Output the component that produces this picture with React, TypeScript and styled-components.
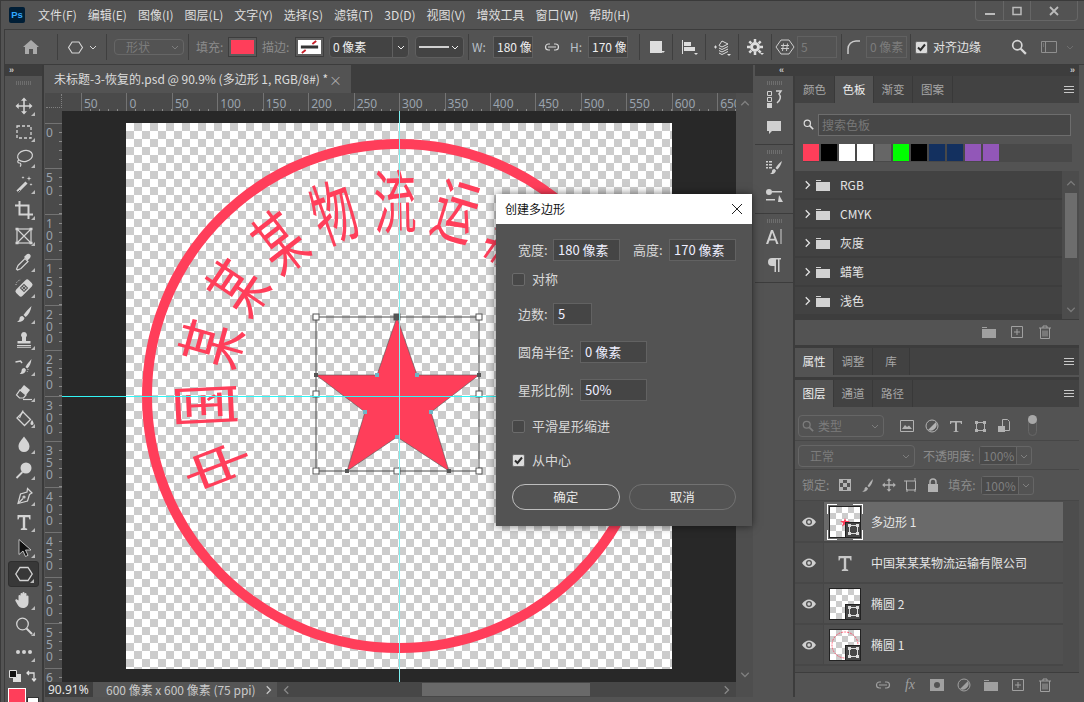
import React from 'react';
import styled, { createGlobalStyle, css } from 'styled-components';

const CJK = `"Noto Sans CJK SC", "Noto Sans", sans-serif`;
const RED = '#ff3e5a';

const Global = createGlobalStyle`
  html, body { margin: 0; padding: 0; height: 100%; background: #535353; overflow: hidden; }
  #root { height: 100%; }
  * { box-sizing: border-box; }
`;

const Win = styled.div`
  width: 1084px; height: 702px; display: flex; flex-direction: column; overflow: hidden;
  background: #535353; color: #e2e2e2; font: 12px/1 ${CJK}; border-top: 1px solid #3a3a3a; border-left: 1px solid #3a3a3a;
`;

/* ---------- menu ---------- */
const MenuBar = styled.div`height: 28px; display: flex; align-items: center; padding: 0 6px 0 8px; flex: none;`;
const PsLogo = styled.div`
  width: 16px; height: 16px; margin: 0 13px 0 0; background: #001e36; border-radius: 2px; color: #31a8ff;
  font: bold 9.5px/16px "Liberation Sans", sans-serif; text-align: center;
`;
const MenuItem = styled.span`margin-right: 11px; font-size: 12px; color: #dedede; white-space: nowrap;`;
const WinCtl = styled.div`
  margin-left: auto; align-self: flex-start; width: 103px; height: 20px; display: flex;
  border: 1px solid #666; border-top: none; border-radius: 0 0 4px 4px;
`;
const WinBtn = styled.div<{ $w: number; $line?: boolean }>`
  width: ${p => p.$w}px; display: flex; align-items: center; justify-content: center; color: #bbb;
  ${p => p.$line && 'border-right: 1px solid #666;'}
`;

/* ---------- options ---------- */
const OptionsBar = styled.div`
  height: 36px; flex: none; display: flex; align-items: center; margin-left: 3px;
  border-top: 1px solid #3c3c3c; border-bottom: 1px solid #3c3c3c; border-left: 1px solid #3c3c3c; background: #535353;
`;
const Slot = styled.div<{ $w: number; $ml?: number; $flag?: boolean }>`
  width: ${p => p.$w}px; margin-left: ${p => p.$ml ?? 0}px; flex: none; display: flex; align-items: center; justify-content: center; gap: 5px; position: relative; color: #d6d6d6;
  ${p => p.$flag && css`&::after { content: ''; position: absolute; right: 7px; bottom: -2px; border: 2px solid transparent; border-top-color: #ddd; }`}
`;
const VLine = styled.div<{ $ml?: number }>`width: 1px; height: 26px; background: #3f3f3f; flex: none; margin-left: ${p => p.$ml ?? 0}px;`;
const OptLabel = styled.span<{ $w: number; $ml?: number; $tone?: 'dim' | 'bright' }>`
  width: ${p => p.$w}px; margin-left: ${p => p.$ml ?? 0}px; flex: none; white-space: nowrap; font-size: 12px;
  color: ${p => (p.$tone === 'dim' ? '#8b8b8b' : p.$tone === 'bright' ? '#e2e2e2' : '#b9c0c8')};
`;
const OptBox = styled.div<{ $w: number; $ml?: number; $dim?: boolean }>`
  width: ${p => p.$w}px; height: 22px; margin-left: ${p => p.$ml ?? 0}px; flex: none; display: flex; align-items: center; overflow: hidden; white-space: nowrap;
  padding: 0 3px; border: 1px solid ${p => (p.$dim ? '#616161' : '#5f5f5f')}; background: ${p => (p.$dim ? 'transparent' : '#434343')};
  color: ${p => (p.$dim ? '#7c7c7c' : '#eee')}; font-size: 12px;
`;
const ColorChip = styled.div<{ $w: number; $ml?: number }>`
  width: ${p => p.$w}px; height: 20px; margin-left: ${p => p.$ml ?? 0}px; flex: none; padding: 2px; border: 1px solid #3d3d3d; background: #5c5c5c; display: flex;
`;
const ChipFill = styled.div<{ $c: string }>`flex: 1; background: ${p => p.$c};`;
const StrokeGlyph = styled.svg`width: 100%; height: 100%; display: block; background: #fff;`;
const Combo = styled.div<{ $w: number; $ml?: number; $dim?: boolean; $h?: number }>`
  width: ${p => p.$w}px; height: ${p => p.$h ?? 22}px; margin-left: ${p => p.$ml ?? 0}px; flex: none; display: flex; align-items: center; justify-content: space-between;
  border: 1px solid ${p => (p.$dim ? '#666' : '#5f5f5f')}; border-radius: 4px; padding: 0 4px 0 3px; color: ${p => (p.$dim ? '#7c7c7c' : '#eee')};
  background: ${p => (p.$dim ? 'transparent' : '#434343')};
`;
const ComboText = styled.span<{ $ml?: number }>`display: flex; align-items: center; gap: 4px; margin-left: ${p => p.$ml ?? 0}px;`;
const ComboSplit = styled.div`display: flex; align-self: stretch; align-items: center; padding-left: 4px; margin-right: -1px; border-left: 1px solid #5f5f5f;`;
const Muted = styled.span`color: #6e6e6e;`;
const CheckBox = styled.div<{ $on?: boolean }>`
  width: 13px; height: 13px; border-radius: 2px; flex: none; display: flex; align-items: center; justify-content: center;
  border: 1px solid #6b6b6b; background: ${p => (p.$on ? '#dcdcdc' : '#474747')}; color: #2c2c2c;
`;

/* ---------- workspace ---------- */
const Workspace = styled.div`flex: 1; min-height: 0; display: flex; margin-left: 3px; border-left: 1px solid #3c3c3c; padding-bottom: 5px; position: relative;`;
const ToolCol = styled.div`width: 38px; flex: none; display: flex; flex-direction: column; align-items: center; height: 640px; overflow: hidden; border-right: 1px solid #3a3a3a; box-shadow: 1px 0 0 #3a3a3a;`;
const StripHead = styled.div<{ $between?: boolean }>`
  height: 11px; width: 100%; flex: none; background: #3d3d3d; color: #c8c8c8; display: flex; align-items: center;
  justify-content: ${p => (p.$between ? 'space-between' : 'flex-start')}; padding: 0 4px; font: bold 9px/11px "Liberation Sans", sans-serif; letter-spacing: -1px;
`;
const Grip = styled.div<{ $mb?: number }>`
  width: 15px; height: 4px; flex: none; margin: 5px 0 ${p => p.$mb ?? 0}px; background: repeating-linear-gradient(90deg, #6e6e6e 0 1px, transparent 1px 2px);
`;
const ToolBtn = styled.div<{ $on?: boolean }>`
  width: 31px; height: 26px; flex: none; display: flex; align-items: center; justify-content: center; position: relative; color: #d4d4d4; border-radius: 3px;
  ${p => p.$on && css`background: #383838; border: 1px solid #2f2f2f;`}
  &::after { content: ''; position: absolute; right: 4px; bottom: 3px; border: 2px solid transparent; border-right-color: #bbb; border-bottom-color: #bbb; }
`;
const ColorRow = styled.div`width: 100%; height: 18px; flex: none; margin-top: 2px; display: flex; align-items: center; padding: 0 4px; justify-content: space-between; color: #ddd;`;
const Fg = styled.div`
  width: 18px; height: 18px; flex: none; align-self: flex-start; margin: 3px 0 0 3px; background: ${RED}; border: 1px solid #fff; position: relative;
  &::after { content: ''; position: absolute; left: 18px; top: 8px; width: 10px; height: 10px; background: #fff; border: 1px solid #333; }
`;

/* ---------- document ---------- */
const Doc = styled.div`width: 708px; flex: none; margin-left: 2px; display: flex; flex-direction: column; background: #3d3d3d;`;
const TabBar = styled.div`height: 28px; flex: none; display: flex; background: #3d3d3d;`;
const DocTab = styled.div`
  width: 306px; display: flex; align-items: center; justify-content: space-between; padding: 0 9px 0 9px; background: #535353; color: #dcdcdc; font-size: 12px; white-space: nowrap;
`;
const TabClose = styled.span`color: #aaa; font-size: 13px;`;
const RulerRow = styled.div`height: 18px; flex: none; display: flex; background: #4a4a4a;`;
const Corner = styled.div`
  width: 17px; flex: none; position: relative;
  &::before { content: ''; position: absolute; left: 1px; right: 0; bottom: 3px; border-bottom: 1px dotted #808080; }
  &::after { content: ''; position: absolute; right: 0; top: 1px; bottom: 3px; border-right: 1px dotted #808080; }
`;
const HRuler = styled.div`width: 674px; display: flex; overflow: hidden; padding-left: 19px;`;
const HCell = styled.div`
  width: 45.45px; flex: none; padding: 5px 0 0 2px; border-left: 1px solid #737373; color: #9aa3ad; font: 12px/12px "Noto Sans", sans-serif; overflow: hidden;
  background: repeating-linear-gradient(90deg, transparent 0 8px, #8a8a8a 8px 9.09px) bottom left / 100% 2px no-repeat;
`;
const ScrollCap = styled.div`flex: 1; background: #4e4e4e; display: flex; align-items: flex-end; justify-content: center; padding-bottom: 2px; color: #808080;`;
const DocBody = styled.div`flex: 1; min-height: 0; display: flex;`;
const VRuler = styled.div`width: 17px; flex: none; overflow: hidden; padding-top: 12px; background: #4a4a4a;`;
const VCell = styled.div`
  height: 45.45px; border-top: 1px solid #737373; padding: 3px 0 0 1px; color: #9aa3ad; font: 12px/12.2px "Noto Sans", sans-serif; overflow: hidden; white-space: pre;
  background: repeating-linear-gradient(180deg, transparent 0 8px, #8a8a8a 8px 9.09px) top right / 3px 100% no-repeat;
`;
const Stage = styled.div`flex: 1; min-width: 0; position: relative; overflow: hidden; background: #282828;`;
const Artboard = styled.div`
  width: 546px; height: 546px; margin: 12px 0 0 64px;
  background-color: #fff;
  background-image: conic-gradient(#ccc 25%, transparent 0 50%, #ccc 0 75%, transparent 0);
  background-size: 16px 16px; background-position: 0 0;
`;
const ArtSvg = styled.svg`display: block; width: 546px; height: 546px;`;
const GuideH = styled.div`position: absolute; left: 0; right: 0; top: 285px; height: 1px; background: #33f5f5;`;
const GuideV = styled.div`position: absolute; top: 0; bottom: 0; left: 337px; width: 1px; background: #7ff0f0;`;
const VScroll = styled.div`width: 17px; flex: none; background: #4e4e4e; display: flex; align-items: flex-end; justify-content: center; padding-bottom: 3px; color: #808080;`;
const Status = styled.div`height: 15px; flex: none; display: flex; align-items: stretch; background: #535353;`;
const Zoomed = styled.div`width: 48px; flex: none; padding-left: 3px; background: #3f3f3f; color: #e4e4e4; font: 12px/15px "Noto Sans", sans-serif;`;
const DocInfo = styled.div`width: 184px; flex: none; padding: 0 4px 0 13px; background: #555; color: #c9c9c9; font-size: 12px; line-height: 15px; white-space: nowrap; display: flex; justify-content: space-between; align-items: center;`;
const HScroll = styled.div`flex: 1; background: #474747; display: flex; align-items: center; padding: 0 5px; color: #8a8a8a;`;
const HThumb = styled.div`width: 168px; height: 13px; margin: 0 auto 0 130px; background: #696969;`;
const StatusCorner = styled.div`width: 17px; flex: none; background: #4e4e4e;`;

/* ---------- dialog ---------- */
const Dialog = styled.div`
  position: absolute; left: 496px; top: 194px; width: 256px; height: 332px; background: #535353; z-index: 5; display: flex; flex-direction: column;
  box-shadow: 0 0 8px rgba(0,0,0,.55);
`;
const DlgTitle = styled.div`height: 30px; flex: none; background: #fff; color: #111; display: flex; align-items: center; justify-content: space-between; padding: 0 8px 0 9px; font-size: 12px;`;
const DlgBody = styled.div`flex: 1; display: flex; flex-direction: column; padding: 15px 16px 16px;`;
const DlgRow = styled.div<{ $mt?: number; $indent?: boolean }>`display: flex; align-items: center; height: 22px; margin-top: ${p => p.$mt ?? 0}px; padding-left: ${p => (p.$indent ? 6 : 0)}px;`;
const DlgLabel = styled.span<{ $w?: number; $ml?: number }>`
  ${p => (p.$w ? `width: ${p.$w}px;` : '')} margin: -2px 0 0 ${p => p.$ml ?? 0}px; flex: none; font-size: 13px; color: #d8d8d8; white-space: nowrap;
`;
const DlgInput = styled.div<{ $w: number }>`
  width: ${p => p.$w}px; height: 22px; flex: none; display: flex; align-items: center; padding: 0 0 2px 4px; background: #454545; border: 1px solid #626262; color: #eef; font-size: 13px; white-space: nowrap;
`;
const DlgBtnRow = styled.div`display: flex; gap: 9px; margin-top: 13px;`;
const DlgBtn = styled.div<{ $primary?: boolean }>`
  width: 108px; height: 26px; border-radius: 13px; display: flex; align-items: center; justify-content: center; font-size: 12.5px; color: #e8e8e8;
  border: 1.5px solid ${p => (p.$primary ? '#bdbdbd' : '#727272')};
`;

/* ---------- right dock ---------- */
const RightDock = styled.div`width: 324px; flex: none; margin-left: 2px; display: flex; flex-direction: column;`;
const DockHead = styled(StripHead)`padding: 0 5px 0 24px; height: 11px;`;
const DockMain = styled.div`flex: 1; min-height: 0; display: flex; gap: 2px; background: #3c3c3c;`;
const IconDock = styled.div`width: 38px; flex: none; display: flex; flex-direction: column; gap: 1px; background: #3c3c3c;`;
const IconGroup = styled.div`height: 68px; flex: none; background: #535353; display: flex; flex-direction: column; align-items: center; color: #d0d0d0;`;
const IconGroupRest = styled.div`flex: 1; background: #535353;`;
const DockBtn = styled.div`height: 28px; flex: none; display: flex; align-items: center; justify-content: center;`;
const PanelsCol = styled.div`width: 284px; flex: none; display: flex; flex-direction: column; gap: 3px; background: #3c3c3c;`;
const Panel = styled.div<{ $h?: number; $grow?: boolean }>`
  ${p => (p.$h ? `height: ${p.$h}px;` : '')} ${p => (p.$grow ? 'flex: 1; min-height: 0;' : 'flex: none;')}
  background: #535353; display: flex; flex-direction: column;
`;
const TabStrip = styled.div`height: 27px; flex: none; display: flex; background: #424242; align-items: stretch; position: relative;`;
const PanelTab = styled.div<{ $on?: boolean; $w: number }>`
  width: ${p => p.$w}px; flex: none; display: flex; align-items: center; justify-content: center; font-size: 11.5px;
  background: ${p => (p.$on ? '#535353' : 'transparent')}; color: ${p => (p.$on ? '#eee' : '#a6a6a6')}; border-right: 1px solid #393939;
`;
const PanelMenu = styled.div`margin: 10px 5px 0 auto; width: 10px; height: 7px; background: repeating-linear-gradient(180deg, #c8c8c8 0 1px, transparent 1px 3px);`;
const SearchRow = styled.div`height: 21px; flex: none; margin: 11px 8px 0 8px; display: flex; align-items: center; gap: 4px; color: #ddd;`;
const SearchInput = styled.div`flex: 1; height: 22px; display: flex; align-items: center; padding-left: 3px; border: 1px solid #6d6d6d; background: #474747; color: #777; font-size: 12px;`;
const SwatchStrip = styled.div`height: 18px; flex: none; margin: 9px 7px 0 8px; display: flex; gap: 2px; background: #494949;`;
const Swatch = styled.div<{ $c: string }>`width: 16px; height: 17px; flex: none; background: ${p => p.$c};`;
const ListWrap = styled.div`height: 148px; flex: none; margin-top: 9px; display: flex; background: #4a4a4a;`;
const ListCol = styled.div`width: 267px; flex: none; display: flex; flex-direction: column; gap: 2px; background: #3d3d3d; overflow: hidden;`;
const ListRow = styled.div`height: 27px; flex: none; display: flex; align-items: center; padding-left: 7px; background: #424242; color: #e4e4e4; font-size: 12px;`;
const FolderSlot = styled.div`width: 24px; margin-left: 4px; flex: none; display: flex; align-items: center; color: #d2d2d2;`;
const ListScroll = styled.div`flex: 1; display: flex; flex-direction: column; align-items: center; padding-top: 8px; color: #7a7a7a; background: #4c4c4c;`;
const ListThumb = styled.div`width: 12px; height: 65px; margin-top: 4px; margin-bottom: 46px; background: #6d6d6d;`;
const PanelFoot = styled.div<{ $h: number; $gap: number }>`
  height: ${p => p.$h}px; flex: none; display: flex; align-items: center; justify-content: flex-end; padding-right: 25px; gap: ${p => p.$gap}px; border-top: 1px solid #3d3d3d; color: #999;
`;
const FootIcon = styled.div`width: 18px; display: flex; justify-content: center; color: #a0a0a0;`;
const FxMark = styled.i`font: italic 14px/1 "Liberation Serif", serif;`;
const LayerCtrl = styled.div<{ $h: number; $pt?: number }>`
  height: ${p => p.$h}px; flex: none; display: flex; align-items: center; padding: ${p => p.$pt ?? 0}px 0 0 3px; border-bottom: 1px solid #474747; color: #a2a2a2; position: relative;
`;
const DimText = styled.span<{ $ml?: number }>`margin-left: ${p => p.$ml ?? 0}px; color: #8b8b8b; font-size: 12px; white-space: nowrap; flex: none;`;
const CtlIcon = styled.div<{ $w: number; $ml?: number }>`width: ${p => p.$w}px; margin-left: ${p => p.$ml ?? 0}px; flex: none; display: flex; justify-content: center; color: #b2b2b2;`;
const FieldDim = styled.div`width: 53px; height: 19px; flex: none; margin-left: 5px; display: flex; border: 1px solid #666; border-radius: 3px; color: #7f7f7f;`;
const FieldValue = styled.div`width: 36px; padding-left: 3px; font-size: 12px; line-height: 17px; background: #4a4a4a;`;
const FieldArrow = styled.div`flex: 1; display: flex; align-items: center; justify-content: center; border-left: 1px solid #666;`;
const Toggle = styled.div`
  width: 9px; height: 20px; margin-left: 12px; border: 1px solid #666; border-radius: 5px; position: relative;
  &::before { content: ''; position: absolute; left: -1px; top: -2px; width: 9px; height: 9px; border-radius: 50%; background: #a8a8a8; }
`;
const Layers = styled.div`flex: 1; min-height: 0; display: flex; background: #4d4d4d; padding-top: 1px;`;
const LayerList = styled.div`width: 268px; flex: none; display: flex; flex-direction: column;`;
const LayerRow = styled.div`height: 41px; flex: none; display: flex; border-bottom: 2px solid #474747;`;
const EyeCell = styled.div`width: 29px; flex: none; display: flex; align-items: center; justify-content: center; color: #d0d0d0; border-right: 1px solid #474747;`;
const LayerBody = styled.div<{ $on?: boolean }>`flex: 1; display: flex; align-items: center; padding-left: 5px; background: ${p => (p.$on ? '#6a6a6a' : '#505050')}; color: #e6e6e6; font-size: 12px; white-space: nowrap;`;
const Thumb = styled.div<{ $on?: boolean }>`
  width: 32px; height: 32px; flex: none; margin-right: 10px; position: relative; border: 1px solid #222;
  background-color: #fff; background-image: conic-gradient(#ccc 25%, transparent 0 50%, #ccc 0 75%, transparent 0); background-size: 12px 12px;
  ${p => p.$on && css`
    &::before {
      content: ''; position: absolute; inset: -3px;
      background:
        linear-gradient(#fff, #fff) 0 0 / 10px 1px no-repeat, linear-gradient(#fff, #fff) 0 0 / 1px 10px no-repeat,
        linear-gradient(#fff, #fff) 100% 0 / 10px 1px no-repeat, linear-gradient(#fff, #fff) 100% 0 / 1px 10px no-repeat,
        linear-gradient(#fff, #fff) 0 100% / 10px 1px no-repeat, linear-gradient(#fff, #fff) 0 100% / 1px 10px no-repeat,
        linear-gradient(#fff, #fff) 100% 100% / 10px 1px no-repeat, linear-gradient(#fff, #fff) 100% 100% / 1px 10px no-repeat;
    }
  `}
`;
const ThumbBadge = styled.div`
  position: absolute; right: -1px; bottom: -1px; width: 16px; height: 16px; background: #474747; border: 1px solid #222; display: flex; align-items: center; justify-content: center; color: #ddd;
`;
const ThumbArt = styled.svg`position: absolute; inset: 0; width: 100%; height: 100%;`;
const TypeGlyph = styled.div`width: 32px; margin-right: 10px; display: flex; justify-content: center; color: #c8c8c8;`;

/* ---------- icons ---------- */
const IconSvg = styled.svg`display: block;`;
const S = ({ children, size = 20, vb = 20 }: { children: React.ReactNode; size?: number; vb?: number }) => (
  <IconSvg width={size} height={size} viewBox={`0 0 ${vb} ${vb}`} fill="none" stroke="none">{children}</IconSvg>
);
const F = 'currentColor';
const Chev = ({ s = 8, dir = 'down' }: { s?: number; dir?: 'down' | 'up' | 'left' | 'right' }) => {
  const d = { down: 'M1 3l3 3 3-3', up: 'M1 5l3-3 3 3', left: 'M5 1L2 4l3 3', right: 'M3 1l3 3-3 3' }[dir];
  return <S size={s} vb={8}><path d={d} stroke={F} strokeWidth="1" /></S>;
};
const tools: Record<string, React.ReactNode> = {
  move: <path fill={F} d="M10 1.500l3 3.200h-2.200v4.500h4.500V7l3.200 3-3.200 3v-2.200h-4.500v4.500H13l-3 3.200-3-3.200h2.200v-4.500H4.700V13L1.500 10l3.200-3v2.200h4.500V4.700H7z" />,
  marquee: <rect x="3" y="4" width="14" height="12" stroke={F} strokeWidth="1.300" strokeDasharray="3 2" />,
  lasso: <g stroke={F} strokeWidth="1.200"><ellipse cx="11" cy="8" rx="7.500" ry="5.500" transform="rotate(-12 11 8)" /><path d="M5 12c-2 1-1.500 3 .5 3s1.500 2.500.5 3.500" /></g>,
  wand: <g><path d="M3.500 17.500l9-9" stroke={F} strokeWidth="3" /><path d="M4 18l2-2" stroke="#535353" strokeWidth="1" /><path fill={F} d="M15 2l.6 1.900L17.500 4.500l-1.900.6L15 7l-.6-1.900-1.900-.6 1.900-.6zM9 2l.4 1.100 1.100.4-1.100.4L9 5l-.4-1.100-1.100-.4 1.100-.4zM17 9l.4 1.100 1.100.4-1.100.4L17 12l-.4-1.100-1.100-.4 1.100-.4z" /></g>,
  crop: <path d="M5.500 1v13.500H19M1 5.500h13.500V19" stroke={F} strokeWidth="2" />,
  frame: <g stroke={F} strokeWidth="1.200"><rect x="3" y="3" width="14" height="14" /><path d="M3 3l14 14M17 3L3 17" /><path strokeWidth="2.500" d="M1.500 3h3M15.500 3h3M1.500 17h3M15.500 17h3" /></g>,
  dropper: <g><path d="M4 13.500l7-7 3 3-7 7-3.500 1.500-1-1z" stroke={F} strokeWidth="1.200" /><path fill={F} d="M10 5l2-2c1.500-1.500 3-1.500 4-.5s1 2.500-.5 4l-2 2z" /></g>,
  heal: <g><g transform="rotate(-45 10 10)"><rect x="1" y="5.500" width="18" height="9" rx="2.500" fill={F} /><rect x="7" y="7" width="6" height="6" fill="#535353" /><path fill={F} d="M8 8h1.500v1.500H8zM10.500 8H12v1.500h-1.500zM8 10.500h1.500V12H8zM10.500 10.500H12V12h-1.500z" /></g><path d="M2 7a5 5 0 0 1 5-5" stroke={F} strokeDasharray="1 1.500" /></g>,
  brush: <path fill={F} d="M17.500 2c-2.500 2.500-6 6-8 9l2.200 2c3-2.500 5-6 5.800-11zM8.500 12c-2.500 0-3 1.500-3 3 0 1-1 2-2.500 3 3.500.5 7-1 7.500-4z" />,
  stamp: <path fill={F} d="M10 2a3 3 0 0 1 2 5.200V11h4.500v2.500h-13V11H8V7.200A3 3 0 0 1 10 2zM3 15h14v1.200H3zM3 17.200h14V18H3z" />,
  history: <g><path fill={F} d="M17.500 3c-2 2.500-4.500 5-6 8l1.800 1.600c2.500-2.500 3.700-5 4.200-9.600zM10.500 12c-2 0-3 1-3 3 0 1-.7 2-1.800 3 3 .5 6-1 6.300-4.200z" /><path d="M1.500 6l5-1 1.500 2" stroke={F} strokeWidth="1.500" /><path d="M14 13a5 5 0 0 1-1 3" stroke={F} strokeDasharray="1 1" /></g>,
  eraser: <g><path fill={F} d="M10 3l6 5-4 5-6-5z" /><path d="M6 8l6 5-2.500 3H5.500L2.500 13z" stroke={F} strokeWidth="1.200" /><path d="M9 17.500h9" stroke={F} strokeWidth="1.200" /></g>,
  bucket: <g><path d="M9 4l7.500 7.500-6 6L3 10z" stroke={F} strokeWidth="1.300" /><path d="M5.500 10L9 2.500" stroke={F} strokeWidth="1.200" /><path fill={F} d="M18 12c1 1.500 1.500 2.500 1.500 3.500a1.500 1.500 0 0 1-3 0c0-1 .5-2 1.500-3.500z" /></g>,
  blur: <path fill={F} d="M10 2.500c3 4 5.500 6.500 5.500 10a5.500 5.500 0 0 1-11 0c0-3.500 2.500-6 5.500-10z" />,
  dodge: <g><circle cx="12" cy="8" r="5.500" fill={F} /><path d="M2.500 18L8.500 12" stroke={F} strokeWidth="1.800" /></g>,
  pen: <g stroke={F} strokeWidth="1.200"><path d="M13.500 2.500l4.500 4.500-2.500 1.500-2 6.500-9.500 2.500 2.500-9.500 6.500-2z" /><path d="M4.500 17L9 12.500" /><circle cx="10" cy="11" r="1" /></g>,
  type: <path fill={F} d="M3.500 3h13v4.500h-1l-.8-2.300H11.200V16l2 .7V18H6.800v-1.300l2-.7V5.200H5.300L4.500 7.500h-1z" />,
  select: <path fill="#111" stroke="#ddd" strokeWidth=".8" d="M5 1.500v15l4-3.500 2.500 5.500 2.500-1.200L11.500 12H17z" />,
  hex: <path d="M6 3.500h8l4.200 6.500-4.200 6.500H6L1.800 10z" stroke={F} strokeWidth="1.300" />,
  hand: <path fill={F} d="M4.500 10.500V6a1 1 0 0 1 2 0V4a1 1 0 0 1 2 0V3a1 1 0 0 1 2 0v1a1 1 0 0 1 2 0v2.500a1 1 0 0 1 2 0V12c0 3.500-2 6-5.500 6-3 0-4.200-1.500-5.500-3.500L1.500 11c-.8-1.300.9-2.300 1.800-1.200z" />,
  zoom: <g stroke={F}><circle cx="8.500" cy="8" r="5.800" strokeWidth="1.300" /><path d="M12.500 12.500L18 18" strokeWidth="2" /></g>,
  dots: <g fill={F}><circle cx="4" cy="10" r="2" /><circle cx="10" cy="10" r="2" /><circle cx="16" cy="10" r="2" /></g>,
};
const toolOrder = ['move', 'marquee', 'lasso', 'wand', 'crop', 'frame', 'dropper', 'heal', 'brush', 'stamp', 'history', 'eraser', 'bucket', 'blur', 'dodge', 'pen', 'type', 'select', 'hex', 'hand', 'zoom', 'dots'];

const Eye = () => <S size={16} vb={16}><path fill={F} d="M1 8c2-3 4.500-4.500 7-4.500S13 5 15 8c-2 3-4.500 4.500-7 4.500S3 11 1 8z" /><circle cx="8" cy="8" r="3" fill="#505050" /><circle cx="8" cy="8" r="1.700" fill={F} /></S>;
const FolderI = ({ s = 14 }: { s?: number }) => <S size={s} vb={14}><path fill={F} d="M0 2h5v1H0zM0 4h14v9H0z" /></S>;
const PlusBox = () => <S size={12} vb={12}><path stroke={F} d="M.5.500h11v11H.500zM6 3v6M3 6h6" /></S>;
const Trash = () => <S size={14} vb={14}><path stroke={F} d="M1 3h12M5 3V1h4v2M2.500 3v10.500h9V3M5 5.500v6M7 5.500v6M9 5.500v6" /></S>;
const MiniPath = () => <S size={11} vb={11}><path stroke={F} d="M1.500 1.500h8v8h-8z" /><path fill={F} d="M0 0h3v3H0zM8 0h3v3H8zM0 8h3v3H0zM8 8h3v3H8z" /></S>;
const Glass = ({ s = 14 }: { s?: number }) => <S size={s} vb={14}><circle cx="5.500" cy="5.500" r="4" stroke={F} strokeWidth="1.500" /><path d="M8.500 8.500L13 13" stroke={F} strokeWidth="2" /></S>;
const Check = () => <S size={9} vb={9}><path d="M1 4.500l2.500 2.500L8 1.500" stroke={F} strokeWidth="2" /></S>;
const Link = () => <S size={16} vb={16}><path stroke={F} strokeWidth="1.200" d="M6 5H4.500a3 3 0 0 0 0 6H6M10 5h1.500a3 3 0 0 1 0 6H10M4 8h8" /></S>;

/* ---------- data ---------- */
const menus = ['文件(F)', '编辑(E)', '图像(I)', '图层(L)', '文字(Y)', '选择(S)', '滤镜(T)', '3D(D)', '视图(V)', '增效工具', '窗口(W)', '帮助(H)'];
const hTicks = ['50', '0', '50', '100', '150', '200', '250', '300', '350', '400', '450', '500', '550', '600', '650'];
const vTicks = ['0', '5\n0', '1\n0\n0', '1\n5\n0', '2\n0\n0', '2\n5\n0', '3\n0\n0', '3\n5\n0', '4\n0\n0', '4\n5\n0', '5\n0\n0', '5\n5\n0', '6'];
const swatches = [RED, '#000', '#fff', '#fff', '#666', '#0f0', '#000', '#13305f', '#13305f', '#9257b8', '#9257b8'];
const groups = ['RGB', 'CMYK', '灰度', '蜡笔', '浅色'];
const sealChars = '中国某某某物流运输有限公司'.split('');
const starPts = '397,317 417,375 479,375 431,412 449,471 397,437 347,471 365,412 316,375 377,375';
const handles: [number, number][] = [[316, 317], [397, 317], [479, 317], [316, 394], [479, 394], [316, 471], [397, 471], [479, 471]];

const Seal = () => (
  <ArtSvg viewBox="126 123 546 546">
    <circle cx="399" cy="396" r="252" fill="none" stroke={RED} strokeWidth="10" />
    {sealChars.map((c, i) => {
      const a = -111 + i * 18.3;
      return (
        <text
          key={i}
          transform={`rotate(${a} 399 396) translate(399 201) scale(0.61 1)`}
          y="27"
          textAnchor="middle"
          fontFamily={`"Noto Sans CJK SC", sans-serif`}
          fontSize="70"
          fill={RED}
        >{c}</text>
      );
    })}
    <polygon points={starPts} fill={RED} stroke="#555" strokeWidth=".6" />
    <rect x="316" y="317" width="163" height="154" fill="none" stroke="#4a4a4a" strokeWidth="1" />
    {handles.map(([x, y], i) => (
      <rect key={i} x={x - 3} y={y - 3} width="6" height="6" fill={i === 1 ? '#555' : '#fff'} stroke="#555" />
    ))}
    {[[316, 375], [479, 375], [347, 471], [449, 471]].map(([x, y], i) => (
      <rect key={i} x={x - 2} y={y - 2} width="4" height="4" fill="#555" />
    ))}
    {[[377, 375], [417, 375], [365, 412], [431, 412], [397, 437]].map(([x, y], i) => (
      <rect key={i} x={x - 2} y={y - 2} width="4" height="4" fill="#6fb5c5" />
    ))}
  </ArtSvg>
);

const LayerThumb = ({ on, art }: { on?: boolean; art?: 'star' | 'ring' }) => (
  <Thumb $on={on}>
    {art === 'star' && <ThumbArt viewBox="0 0 30 30"><path fill={RED} d="M15 11l1.200 3H20l-3 2 1 3.500L15 17.500 12 19.500l1-3.500-3-2h3.800z" /></ThumbArt>}
    {art === 'ring' && <ThumbArt viewBox="0 0 30 30"><circle cx="15" cy="15" r="13" fill="none" stroke={RED} strokeWidth=".8" strokeDasharray="2 1" /></ThumbArt>}
    <ThumbBadge><MiniPath /></ThumbBadge>
  </Thumb>
);

export default function App() {
  return (
    <Win>
      <Global />
      <MenuBar>
        <PsLogo>Ps</PsLogo>
        {menus.map(m => <MenuItem key={m}>{m}</MenuItem>)}
        <WinCtl>
          <WinBtn $w={28} $line><S size={10} vb={10}><path fill={F} d="M0 7h10v2H0z" /></S></WinBtn>
          <WinBtn $w={27} $line><S size={10} vb={10}><path stroke={F} strokeWidth="1.500" d="M1 1.500h8v7H1z" /></S></WinBtn>
          <WinBtn $w={46}><S size={10} vb={10}><path stroke={F} strokeWidth="1.800" d="M1 1l8 8M9 1l-8 8" /></S></WinBtn>
        </WinCtl>
      </MenuBar>

      <OptionsBar>
        <Slot $w={52}><S size={18} vb={18}><path fill="#a9a9a9" d="M9 2l8 7h-2v7h-4v-5H7v5H3V9H1z" /></S></Slot>
        <VLine />
        <Slot $w={48}><S size={17}>{tools.hex}</S><Chev /></Slot>
        <VLine />
        <Combo $w={70} $ml={7} $dim $h={16}><ComboText $ml={8}>形状</ComboText><Chev /></Combo>
        <VLine $ml={4} />
        <OptLabel $w={29} $ml={7} $tone="dim">填充:</OptLabel>
        <ColorChip $w={29} $ml={3}><ChipFill $c={RED} /></ColorChip>
        <OptLabel $w={29} $ml={5} $tone="dim">描边:</OptLabel>
        <ColorChip $w={29} $ml={4}>
          <StrokeGlyph viewBox="0 0 24 14" preserveAspectRatio="none">
            <path d="M3 7h18" stroke="#333" strokeWidth="3" />
            <path d="M15 4l4-3M4 13l4-3" stroke="#c8202a" strokeWidth="2" />
          </StrokeGlyph>
        </ColorChip>
        <Combo $w={80} $ml={5}><span>0 像素</span><ComboSplit><Chev /></ComboSplit></Combo>
        <Combo $w={49} $ml={6}><svg width="30" height="4"><path d="M0 2h30" stroke="#fff" strokeWidth="1.500" /></svg><Chev /></Combo>
        <VLine $ml={4} />
        <OptLabel $w={14} $ml={3}>W:</OptLabel>
        <OptBox $w={40} $ml={7}>180 像素</OptBox>
        <Slot $w={37}><Link /></Slot>
        <OptLabel $w={13}>H:</OptLabel>
        <OptBox $w={40} $ml={5}>170 像素</OptBox>
        <VLine $ml={11} />
        <Slot $w={32} $flag><S size={12} vb={12}><path fill="#ddd" d="M0 0h12v12H0z" /></S></Slot>
        <VLine />
        <Slot $w={32} $flag><S size={16} vb={16}><path stroke="#ddd" d="M1.500 1v14" /><path fill="#ddd" d="M3 3h7v4H3zM3 8h11v4H3z" /></S></Slot>
        <VLine />
        <Slot $w={32} $flag><S size={18} vb={18}><path stroke="#ddd" d="M1 9h3M2.500 7.500v3M9 3l6 3-6 3-3-1.500zM6 10l3 1.500 6-3M6 12.500l3 1.500 6-3M6 15l3 1.500 6-3" /></S></Slot>
        <VLine />
        <Slot $w={32} $flag><S size={16} vb={16}><circle cx="8" cy="8" r="3.500" stroke="#ddd" strokeWidth="3" /><path stroke="#ddd" strokeWidth="2.500" d="M8 0v3M8 13v3M0 8h3M13 8h3M2.300 2.300l2 2M11.700 11.700l2 2M13.700 2.300l-2 2M4.300 11.700l-2 2" /></S></Slot>
        <VLine />
        <Slot $w={25}><S size={20}><path stroke="#ccc" d="M6 3h8l5 7-5 7H6l-5-7z" /><path stroke="#ccc" d="M8.500 6.500L7.500 14M12.500 6.500L11.500 14M6 8.500h8M6 11.500h8" /></S></Slot>
        <OptBox $w={40} $dim>5</OptBox>
        <VLine $ml={4} />
        <Slot $w={24}><S size={14} vb={14}><path d="M1 14V9a8 8 0 0 1 8-8h4" stroke="#ccc" strokeWidth="1.500" /></S></Slot>
        <OptBox $w={41} $dim>0 像素</OptBox>
        <VLine $ml={3} />
        <Slot $w={20}><CheckBox $on><Check /></CheckBox></Slot>
        <OptLabel $w={50} $ml={2} $tone="bright">对齐边缘</OptLabel>
        <Slot $w={36} $ml={18}><Glass s={16} /></Slot>
        <Slot $w={24}><S size={16} vb={16}><path stroke="#8f8f8f" d="M.5 2.500h15v11H.5zM4.500 2.500v11" /><path stroke="#8f8f8f" d="M2 5h1M2 7h1" /></S></Slot>
        <Slot $w={18}><Muted><Chev /></Muted></Slot>
      </OptionsBar>

      <Workspace>
        <ToolCol>
          <StripHead>››</StripHead>
          <Grip $mb={8} />
          {toolOrder.map(t => (
            <ToolBtn key={t} $on={t === 'hex'}><S>{tools[t]}</S></ToolBtn>
          ))}
          <ColorRow>
            <S size={12} vb={12}><path fill="#ddd" d="M4 4h8v8H4z" /><path fill="#111" stroke="#ddd" d="M.5.5h7v7h-7z" /></S>
            <S size={12} vb={12}><path stroke="#ddd" strokeWidth="1.300" d="M1 3h7v8M6 8.500l2 2.500 2-2.500M3 1L1 3l2 2" /></S>
          </ColorRow>
          <Fg />
        </ToolCol>

        <Doc>
          <TabBar>
            <DocTab>
              <span>未标题-3-恢复的.psd @ 90.9% (多边形 1, RGB/8#) *</span>
              <TabClose>×</TabClose>
            </DocTab>
          </TabBar>
          <RulerRow>
            <Corner />
            <HRuler>{hTicks.map((t, i) => <HCell key={i}>{t}</HCell>)}</HRuler>
            <ScrollCap><Chev dir="up" s={10} /></ScrollCap>
          </RulerRow>
          <DocBody>
            <VRuler>{vTicks.map((t, i) => <VCell key={i}>{t}</VCell>)}</VRuler>
            <Stage>
              <Artboard><Seal /></Artboard>
              <GuideH />
              <GuideV />
            </Stage>
            <VScroll><Chev s={10} /></VScroll>
          </DocBody>
          <Status>
            <Zoomed>90.91%</Zoomed>
            <DocInfo><span>600 像素 x 600 像素 (75 ppi)</span><Chev dir="right" s={10} /></DocInfo>
            <HScroll>
              <Chev dir="left" s={10} />
              <HThumb />
              <Chev dir="right" s={10} />
            </HScroll>
            <StatusCorner />
          </Status>
        </Doc>

        <RightDock>
          <DockHead $between><span>‹‹</span><span>››</span></DockHead>
          <DockMain>
            <IconDock>
              <IconGroup>
                <Grip />
                <DockBtn><S><path stroke={F} d="M3.500 2.500h4v4h-4zM3.500 8.500h4v4h-4z" /><path fill={F} d="M3 14h5v5H3z" /><path stroke={F} strokeWidth="1.500" d="M12 2h5l-2 3c2 2 2 6-2 9" /></S></DockBtn>
                <DockBtn><S><path fill={F} d="M3 4h14v10H8l-3 3v-3H3z" /></S></DockBtn>
              </IconGroup>
              <IconGroup>
                <Grip />
                <DockBtn><S>
                  <path fill={F} d="M2 3h2v1.500H2zM5 3h3v1.500H5zM2 6h2v1.500H2zM5 6h3v1.500H5zM2 9h2v1.500H2zM5 9h3v1.500H5z" />
                  <path fill={F} d="M18 3c-2.500 2-5 4.500-6.500 7l1.700 1.500C15.500 9.500 17 7 18 3zM10.500 11c-2 0-2.500 1.200-2.500 2.500 0 1-1 2-2 2.500 3 .500 5.500-.7 6-3.500z" />
                </S></DockBtn>
                <DockBtn><S><circle cx="5" cy="6" r="3" fill={F} /><path fill={F} d="M8 5h10v1.500H8zM2 13h9v1.500H2zM15 9l4 7h-5z" /></S></DockBtn>
              </IconGroup>
              <IconGroup>
                <Grip />
                <DockBtn><S><path fill={F} d="M7 3h2l5.500 14h-2.200l-1.200-3.500H5.500L4.200 17H2zM6.200 11.700h4.200L8.200 5.500zM16.500 2h1v15h-1z" /></S></DockBtn>
                <DockBtn><S><path fill={F} d="M8 3h9v1.500h-1.500V17h-1.500V4.500h-2V17h-1.500v-6H8a4 4 0 0 1 0-8z" /></S></DockBtn>
              </IconGroup>
              <IconGroupRest />
            </IconDock>

            <PanelsCol>
              <Panel $h={269}>
                <TabStrip>
                  <PanelTab $w={40}>颜色</PanelTab>
                  <PanelTab $w={39} $on>色板</PanelTab>
                  <PanelTab $w={39}>渐变</PanelTab>
                  <PanelTab $w={40}>图案</PanelTab>
                  <PanelMenu />
                </TabStrip>
                <SearchRow><Glass s={11} /><SearchInput>搜索色板</SearchInput></SearchRow>
                <SwatchStrip>{swatches.map((c, i) => <Swatch key={i} $c={c} />)}</SwatchStrip>
                <ListWrap>
                  <ListCol>
                    {groups.map(g => (
                      <ListRow key={g}>
                        <Chev s={10} dir="right" />
                        <FolderSlot><FolderI /></FolderSlot>
                        <span>{g}</span>
                      </ListRow>
                    ))}
                  </ListCol>
                  <ListScroll><Chev dir="up" s={10} /><ListThumb /><Chev s={10} /></ListScroll>
                </ListWrap>
                <PanelFoot $h={25} $gap={10}>
                  <FootIcon><FolderI /></FootIcon>
                  <FootIcon><PlusBox /></FootIcon>
                  <FootIcon><Trash /></FootIcon>
                </PanelFoot>
              </Panel>
              <Panel $h={29}>
                <TabStrip>
                  <PanelTab $w={39} $on>属性</PanelTab>
                  <PanelTab $w={39}>调整</PanelTab>
                  <PanelTab $w={37}>库</PanelTab>
                  <PanelMenu />
                </TabStrip>
              </Panel>
              <Panel $grow>
                <TabStrip>
                  <PanelTab $w={39} $on>图层</PanelTab>
                  <PanelTab $w={39}>通道</PanelTab>
                  <PanelTab $w={40}>路径</PanelTab>
                  <PanelMenu />
                </TabStrip>
                <LayerCtrl $h={34} $pt={5}>
                  <Combo $w={86} $dim>
                    <ComboText><Glass s={12} /><span>类型</span></ComboText>
                    <Chev />
                  </Combo>
                  <CtlIcon $w={26} $ml={10}><S size={14} vb={14}><path stroke={F} d="M.5 1.500h13v11H.5z" /><path fill={F} d="M2 10l3-4 2 2 2-1.500 3 3.500z" /></S></CtlIcon>
                  <CtlIcon $w={24}><S size={14} vb={14}><circle cx="7" cy="7" r="6" stroke={F} /><path fill={F} d="M11 3L3 11a6 6 0 0 0 8-8z" /></S></CtlIcon>
                  <CtlIcon $w={24}><S size={14} vb={14}><path fill={F} d="M1 2h12v3h-1l-.5-1.500H8V12l1.500.5V13h-5v-.5L6 12V3.500H2.500L2 5H1z" /></S></CtlIcon>
                  <CtlIcon $w={24}><MiniPath /></CtlIcon>
                  <CtlIcon $w={24}><S size={14} vb={14}><path stroke={F} d="M5.500.5h5l2 2v9h-7z" /><path fill={F} d="M1 7h7v6H1z" /></S></CtlIcon>
                  <Toggle />
                </LayerCtrl>
                <LayerCtrl $h={29} $pt={1}>
                  <Combo $w={117} $dim>
                    <ComboText $ml={8}>正常</ComboText><Chev />
                  </Combo>
                  <DimText $ml={8}>不透明度:</DimText>
                  <FieldDim><FieldValue>100%</FieldValue><FieldArrow><Chev /></FieldArrow></FieldDim>
                </LayerCtrl>
                <LayerCtrl $h={31}>
                  <DimText $ml={4}>锁定:</DimText>
                  <CtlIcon $w={23} $ml={4}><S size={12} vb={12}><path stroke={F} d="M.5.5h11v11H.5z" /><path fill={F} d="M0 0h4v4H0zM8 0h4v4H8zM4 4h4v4H4zM0 8h4v4H0zM8 8h4v4H8z" /></S></CtlIcon>
                  <CtlIcon $w={22}><S size={14} vb={14}><path fill={F} d="M13 1c-2 2-4 4.500-5.500 7l1.500 1.300C11 7.500 12.500 5 13 1zM6.500 9c-2 0-2 1.500-2 2.500 0 .5-1 1.500-2.500 2 3 .500 5.500-.5 6-3z" /></S></CtlIcon>
                  <CtlIcon $w={22}><S size={16}>{tools.move}</S></CtlIcon>
                  <CtlIcon $w={22}><S size={14} vb={14}><path stroke={F} d="M2.500 3h9v9h-9zM0 3h3M11 0v3M11 11v3M3 11v3" /></S></CtlIcon>
                  <CtlIcon $w={22}><S size={14} vb={14}><path fill={F} d="M2 6h10v8H2z" /><path stroke={F} strokeWidth="1.500" d="M4 6V4a3 3 0 0 1 6 0v2" /></S></CtlIcon>
                  <DimText $ml={4}>填充:</DimText>
                  <FieldDim><FieldValue>100%</FieldValue><FieldArrow><Chev /></FieldArrow></FieldDim>
                </LayerCtrl>
                <Layers>
                  <LayerList>
                    <LayerRow>
                      <EyeCell><Eye /></EyeCell>
                      <LayerBody $on><LayerThumb on art="star" />多边形 1</LayerBody>
                    </LayerRow>
                    <LayerRow>
                      <EyeCell><Eye /></EyeCell>
                      <LayerBody><TypeGlyph><S size={20}>{tools.type}</S></TypeGlyph>中国某某某物流运输有限公司</LayerBody>
                    </LayerRow>
                    <LayerRow>
                      <EyeCell><Eye /></EyeCell>
                      <LayerBody><LayerThumb />椭圆 2</LayerBody>
                    </LayerRow>
                    <LayerRow>
                      <EyeCell><Eye /></EyeCell>
                      <LayerBody><LayerThumb art="ring" />椭圆 1</LayerBody>
                    </LayerRow>
                  </LayerList>
                </Layers>
                <PanelFoot $h={25} $gap={9}>
                  <FootIcon><Link /></FootIcon>
                  <FootIcon><FxMark>fx</FxMark></FootIcon>
                  <FootIcon><S size={14} vb={14}><path fill={F} fillRule="evenodd" d="M0 1h14v12H0zM7 4a3 3 0 1 0 0 6 3 3 0 0 0 0-6z" /></S></FootIcon>
                  <FootIcon><S size={14} vb={14}><circle cx="7" cy="7" r="6" stroke={F} /><path fill={F} d="M11 3L3 11a6 6 0 0 0 8-8z" /></S></FootIcon>
                  <FootIcon><FolderI /></FootIcon>
                  <FootIcon><PlusBox /></FootIcon>
                  <FootIcon><Trash /></FootIcon>
                </PanelFoot>
              </Panel>
            </PanelsCol>
          </DockMain>
        </RightDock>
      </Workspace>

      <Dialog>
        <DlgTitle>
          <span>创建多边形</span>
          <S size={14} vb={14}><path stroke="#222" d="M2 2l10 10M12 2L2 12" /></S>
        </DlgTitle>
        <DlgBody>
          <DlgRow $indent>
            <DlgLabel $w={35}>宽度:</DlgLabel><DlgInput $w={67}>180 像素</DlgInput>
            <DlgLabel $w={36} $ml={13}>高度:</DlgLabel><DlgInput $w={67}>170 像素</DlgInput>
          </DlgRow>
          <DlgRow $mt={7}><CheckBox /><DlgLabel $ml={7}>对称</DlgLabel></DlgRow>
          <DlgRow $mt={13} $indent><DlgLabel $w={35}>边数:</DlgLabel><DlgInput $w={39}>5</DlgInput></DlgRow>
          <DlgRow $mt={16} $indent><DlgLabel $w={62}>圆角半径:</DlgLabel><DlgInput $w={67}>0 像素</DlgInput></DlgRow>
          <DlgRow $mt={16} $indent><DlgLabel $w={62}>星形比例:</DlgLabel><DlgInput $w={67}>50%</DlgInput></DlgRow>
          <DlgRow $mt={14}><CheckBox /><DlgLabel $ml={7}>平滑星形缩进</DlgLabel></DlgRow>
          <DlgRow $mt={12}><CheckBox $on><Check /></CheckBox><DlgLabel $ml={7}>从中心</DlgLabel></DlgRow>
          <DlgBtnRow>
            <DlgBtn $primary>确定</DlgBtn>
            <DlgBtn>取消</DlgBtn>
          </DlgBtnRow>
        </DlgBody>
      </Dialog>
    </Win>
  );
}
